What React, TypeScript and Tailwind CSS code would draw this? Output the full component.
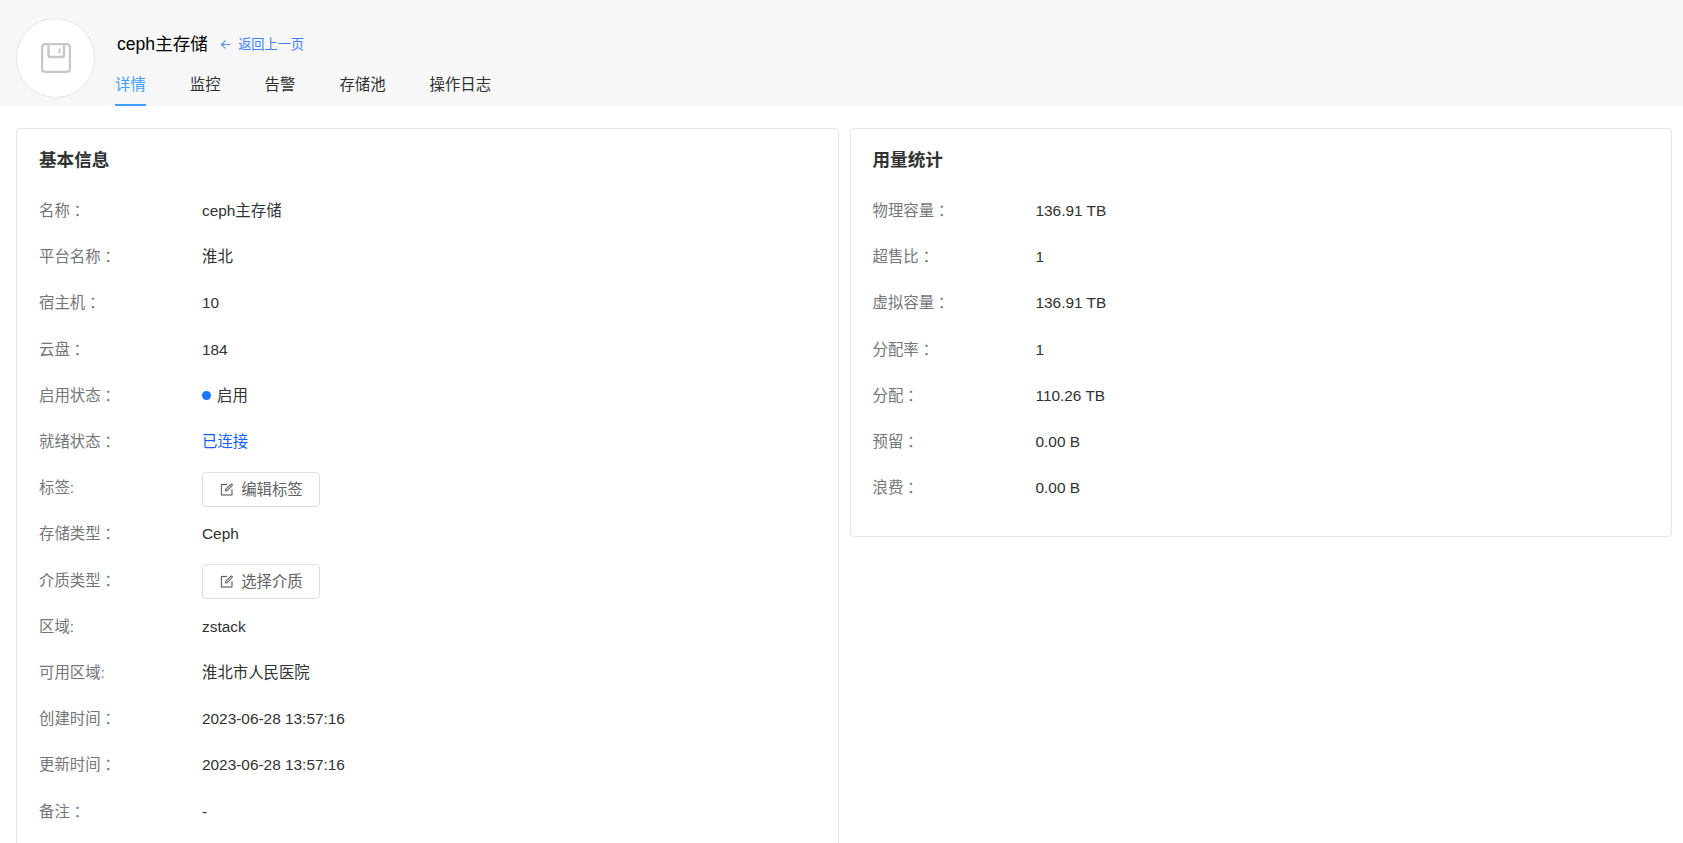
import type { ReactNode } from "react";

interface Item {
  label: string;
  value: ReactNode;
}

const tabs = ["详情", "监控", "告警", "存储池", "操作日志"];

const basicInfo: Item[] = [
  { label: "名称：", value: "ceph主存储" },
  { label: "平台名称：", value: "淮北" },
  { label: "宿主机：", value: "10" },
  { label: "云盘：", value: "184" },
  {
    label: "启用状态：",
    value: (
      <span className="flex items-center gap-1.5">
        <i className="size-[9px] rounded-full bg-[#1677ff]" />
        启用
      </span>
    ),
  },
  { label: "就绪状态：", value: <span className="text-[#165dff]">已连接</span> },
  { label: "标签:", value: <EditButton>编辑标签</EditButton> },
  { label: "存储类型：", value: "Ceph" },
  { label: "介质类型：", value: <EditButton>选择介质</EditButton> },
  { label: "区域:", value: "zstack" },
  { label: "可用区域:", value: "淮北市人民医院" },
  { label: "创建时间：", value: "2023-06-28 13:57:16" },
  { label: "更新时间：", value: "2023-06-28 13:57:16" },
  { label: "备注：", value: "-" },
];

const usage: Item[] = [
  { label: "物理容量：", value: "136.91 TB" },
  { label: "超售比：", value: "1" },
  { label: "虚拟容量：", value: "136.91 TB" },
  { label: "分配率：", value: "1" },
  { label: "分配：", value: "110.26 TB" },
  { label: "预留：", value: "0.00 B" },
  { label: "浪费：", value: "0.00 B" },
];

function EditButton({ children }: { children: ReactNode }) {
  return (
    <button className="mt-[3px] flex h-[35px] w-[118px] items-center justify-center gap-[6.5px] rounded-[4px] border border-[#dcdfe6] bg-white text-[#606266]">
      <svg viewBox="0 0 1024 1024" className="size-[15.4px]" fill="currentColor" stroke="currentColor" strokeWidth="12">
        <path d="M832 512a32 32 0 1 1 64 0v352a32 32 0 0 1-32 32H160a32 32 0 0 1-32-32V160a32 32 0 0 1 32-32h352a32 32 0 0 1 0 64H192v640h640V512z" />
        <path d="m469.952 554.24 52.8-7.552L847.104 222.4a32 32 0 1 0-45.248-45.248L477.44 501.44l-7.552 52.8zm422.4-422.4a96 96 0 0 1 0 135.808l-331.84 331.84a32 32 0 0 1-18.112 9.088L436.8 623.68a32 32 0 0 1-36.224-36.224l15.104-105.6a32 32 0 0 1 9.024-18.112l331.904-331.84a96 96 0 0 1 135.744 0z" />
      </svg>
      {children}
    </button>
  );
}

function Label({ text }: { text: string }) {
  // the TC face keeps the full-width colon centred in its box
  const wide = text.endsWith("：");
  return (
    <dt className="w-[163px] shrink-0 text-[#73767a]">
      {wide ? text.slice(0, -1) : text}
      {wide && <span className="inline-block translate-y-px font-['Noto_Sans_CJK_TC',sans-serif] leading-none">：</span>}
    </dt>
  );
}

function Card({ title, items }: { title: string; items: Item[] }) {
  return (
    <section className="flex-1 rounded-[4px] border border-[#e4e7ed] bg-white px-[22px] pt-[17.5px] pb-[25.5px]">
      <h2 className="text-[17.6px] leading-[26px] font-bold text-[#303133]">{title}</h2>
      <dl className="mt-[15px]">
        {items.map((item) => (
          <div key={item.label} className="flex h-[46.2px] items-center">
            <Label text={item.label} />
            <dd>{item.value}</dd>
          </div>
        ))}
      </dl>
    </section>
  );
}

export default function App() {
  return (
    <div className="h-[843px] overflow-hidden bg-white font-['Liberation_Sans','Noto_Sans_CJK_SC',sans-serif] text-[15.4px] leading-[23px] text-[#303133]">
      <header className="flex h-[106px] bg-[#f7f7f7] pl-4">
        <div className="mt-[18px] flex h-[80px] w-[79px] items-center justify-center rounded-full border border-[#e6e6e6] bg-white">
          <svg viewBox="0 0 30 30" className="size-[30px]" fill="none" stroke="#c8c8c8" strokeWidth="2">
            <rect x="1" y="1" width="28" height="28" rx="3.5" strokeWidth="2.4" />
            <path d="M7.5 1v11.5a1.5 1.5 0 0 0 1.5 1.5h12.5a1.5 1.5 0 0 0 1.5-1.5V1" strokeWidth="2.4" />
            <path d="M18.5 5.5v5" />
          </svg>
        </div>
        <div className="ml-5 flex flex-col">
          <div className="mt-8 flex h-6 items-center pl-0.5">
            <h1 className="text-[17.6px] text-black">ceph主存储</h1>
            <a className="ml-[11px] flex items-center gap-[6px] text-[13.2px] text-[#4080ff]">
              <svg viewBox="0 0 1024 1024" className="mt-px size-[13.2px]" fill="currentColor" stroke="currentColor" strokeWidth="12">
                <path d="M224 480h640a32 32 0 1 1 0 64H224a32 32 0 0 1 0-64z" />
                <path d="m237.248 512 265.408 265.344a32 32 0 0 1-45.312 45.312l-288-288a32 32 0 0 1 0-45.312l288-288a32 32 0 1 1 45.312 45.312L237.248 512z" />
              </svg>
              返回上一页
            </a>
          </div>
          <nav className="mt-auto flex gap-11">
            {tabs.map((tab, i) => (
              <a
                key={tab}
                className={
                  i === 0
                    ? "flex h-[42px] items-center justify-center border-b-2 border-[#409eff] pb-1 pt-[5px] text-[#409eff]"
                    : "flex h-[42px] items-center justify-center border-b-2 border-transparent pb-1 pt-[5px]"
                }
              >
                {tab}
              </a>
            ))}
          </nav>
        </div>
      </header>
      <main className="flex items-start gap-[11px] pt-[22px] pr-[11px] pl-4">
        <Card title="基本信息" items={basicInfo} />
        <Card title="用量统计" items={usage} />
      </main>
    </div>
  );
}
